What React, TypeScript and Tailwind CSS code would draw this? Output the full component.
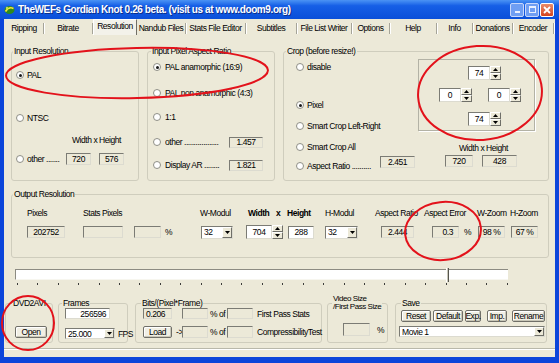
import type { ReactNode } from "react";

// Gordian Knot - Resolution tab (XP look, red markup ellipses on top)

const raised = "border border-t-white border-l-white border-r-[#6f6f68] border-b-[#6f6f68] bg-[#ece9d8]";
const sunken = "border border-t-[#7b7b74] border-l-[#7b7b74] border-r-[#dcdbd0] border-b-[#dcdbd0]";

function Radio({ checked = false }: { checked?: boolean }) {
  return (
    <span className="flex h-[8px] w-[8px] shrink-0 items-center justify-center rounded-full border border-[#8f8f86] bg-white">
      {checked && <span className="h-[3px] w-[3px] rounded-full bg-[#1a1a1a]" />}
    </span>
  );
}

function Field({ className = "", white = false, children }: { className?: string; white?: boolean; children?: ReactNode }) {
  return (
    <div className={`flex shrink-0 items-center ${sunken} ${white ? "bg-white" : "bg-[#ece9d8]"} ${className}`}>
      {children}
    </div>
  );
}

function DownArrow() {
  return (
    <svg width="5" height="3" viewBox="0 0 5 3">
      <path d="M0 0h5L2.5 3z" fill="#000" />
    </svg>
  );
}

function UpArrow() {
  return (
    <svg width="5" height="3" viewBox="0 0 5 3">
      <path d="M0 3h5L2.5 0z" fill="#000" />
    </svg>
  );
}

function Combo({ className = "", value }: { className?: string; value: string }) {
  return (
    <div className={`flex shrink-0 items-stretch bg-white ${sunken} ${className}`}>
      <span className="flex flex-1 items-center pl-[2px]">{value}</span>
      <span className={`flex w-[10px] items-center justify-center ${raised}`}>
        <DownArrow />
      </span>
    </div>
  );
}

function Spin({ value, boxW = "w-[22px]" }: { value: string; boxW?: string }) {
  return (
    <div className="flex h-[14px] shrink-0">
      <div className={`flex items-center justify-center bg-white ${sunken} ${boxW}`}>{value}</div>
      <div className="flex w-[11px] flex-col">
        <span className={`flex flex-1 items-center justify-center ${raised}`}>
          <UpArrow />
        </span>
        <span className={`flex flex-1 items-center justify-center ${raised}`}>
          <DownArrow />
        </span>
      </div>
    </div>
  );
}

function Btn({ className = "", children }: { className?: string; children: ReactNode }) {
  return (
    <div
      className={`flex shrink-0 items-center justify-center rounded-[2px] border border-[#706f68] bg-[#f1efe4] whitespace-nowrap shadow-[inset_1px_1px_0_#fff,inset_-1px_-1px_0_#c9c7b8] ${className}`}
    >
      {children}
    </div>
  );
}

function Group({
  label,
  className = "",
  legendClass = "ml-px",
  children,
}: {
  label: ReactNode;
  className?: string;
  legendClass?: string;
  children?: ReactNode;
}) {
  return (
    <fieldset className={`min-w-0 shrink-0 rounded-[3px] border border-[#cfcdbd] ${className}`}>
      <legend className={`px-px leading-[10px] ${legendClass}`}>{label}</legend>
      {children}
    </fieldset>
  );
}

const tabs: [string, string][] = [
  ["Ripping", "w-[39px]"],
  ["Bitrate", "w-[49px]"],
  ["Resolution", "w-[44px]"],
  ["Nandub Files", "w-[49px]"],
  ["Stats File Editor", "w-[60px]"],
  ["Subtitles", "w-[51px]"],
  ["File List Writer", "w-[55px]"],
  ["Options", "w-[38px]"],
  ["Help", "w-[47px]"],
  ["Info", "w-[36px]"],
  ["Donations", "w-[40px]"],
  ["Encoder", "w-[41px]"],
];

function Tabs() {
  return (
    <div className="flex h-[16px] shrink-0 items-stretch pl-px">
      {tabs.map(([name, w]) =>
        name === "Resolution" ? (
          <div
            key={name}
            className={`flex items-start justify-center border-t border-l border-white border-r border-r-[#716f66] bg-[#f3f2ea] pt-[1px] ${w}`}
          >
            {name}
          </div>
        ) : (
          <div key={name} className={`flex items-center pt-[2px] ${w}`}>
            <span className="flex-1 text-center whitespace-nowrap">{name}</span>
            <span className="h-[11px] w-px bg-[#a5a498] shadow-[1px_0_0_#fff]" />
          </div>
        )
      )}
    </div>
  );
}

function TitleBar() {
  return (
    <div className="flex h-[19px] shrink-0 items-center bg-linear-to-b from-[#4b93f4] via-[#165fe6] via-30% to-[#0a4fd9] pr-[5px] pl-[4px]">
      <svg width="11" height="10" viewBox="0 0 11 10" className="shrink-0">
        <ellipse cx="5.5" cy="5" rx="5" ry="4" fill="#2e8b1e" />
        <path d="M1.5 6.5 Q5 1 9.5 3.5" stroke="#f4e23a" strokeWidth="1.6" fill="none" />
        <circle cx="3" cy="3" r="1.2" fill="#b7e25a" />
      </svg>
      <span className="ml-[3px] text-[10px] font-bold tracking-[-0.4px] text-white [text-shadow:1px_1px_0_#0b2f8c]">
        TheWEFs Gordian Knot 0.26 beta. (visit us at www.doom9.org)
      </span>
      <div className="ml-auto flex gap-[1px]">
        <div className="flex h-[14px] w-[14px] items-end justify-center rounded-[2px] border border-[#c9d8fb] bg-[#6f9ef3] pb-[3px]">
          <span className="h-[2px] w-[5px] bg-[#e9f0ff]" />
        </div>
        <div className="flex h-[14px] w-[14px] items-center justify-center rounded-[2px] border border-[#c9d8fb] bg-[#6f9ef3]">
          <span className="h-[7px] w-[7px] border border-t-2 border-[#e9f0ff]" />
        </div>
        <div className="flex h-[14px] w-[14px] items-center justify-center rounded-[2px] border border-white bg-linear-to-b from-[#e98b69] to-[#d2421b]">
          <svg width="8" height="8" viewBox="0 0 8 8">
            <path d="M1 1l6 6M7 1L1 7" stroke="#fff" strokeWidth="1.8" />
          </svg>
        </div>
      </div>
    </div>
  );
}

function TopGroups() {
  return (
    <div className="mt-[11px] flex shrink-0 gap-[8px] pl-[7px]">
      <Group label="Input Resolution" className="h-[135px] w-[128px]">
        <div className="flex flex-col pl-[4px]">
          <div className="mt-[13px] flex h-[12px] items-center gap-[3px]">
            <Radio checked />
            <span>PAL</span>
          </div>
          <div className="mt-[31px] flex h-[12px] items-center gap-[3px]">
            <Radio />
            <span>NTSC</span>
          </div>
          <div className="mt-[11px] h-[10px] pl-[56px] whitespace-nowrap">Width x Height</div>
          <div className="mt-[8px] flex h-[12px] items-center">
            <Radio />
            <span className="ml-[3px] w-[39px] whitespace-nowrap">other .......</span>
            <Field className="h-[12px] w-[25px] justify-center">720</Field>
            <Field className="ml-[8px] h-[12px] w-[25px] justify-center">576</Field>
          </div>
        </div>
      </Group>

      <Group label="Input Pixel Aspect Ratio" className="h-[135px] w-[128px]" legendClass="ml-[3px]">
        <div className="flex flex-col pl-[5px]">
          <div className="mt-[5px] flex h-[12px] items-center gap-[4px]">
            <Radio checked />
            <span className="whitespace-nowrap">PAL anamorphic (16:9)</span>
          </div>
          <div className="mt-[14px] flex h-[12px] items-center gap-[4px]">
            <Radio />
            <span className="whitespace-nowrap">PAL non anamorphic (4:3)</span>
          </div>
          <div className="mt-[12px] flex h-[12px] items-center gap-[4px]">
            <Radio />
            <span>1:1</span>
          </div>
          <div className="mt-[13px] flex h-[12px] items-center">
            <Radio />
            <span className="ml-[4px] w-[64px] overflow-hidden whitespace-nowrap">other ..................</span>
            <Field className="h-[11px] w-[34px] justify-center">1.457</Field>
          </div>
          <div className="mt-[11px] flex h-[12px] items-center">
            <Radio />
            <span className="ml-[4px] w-[64px] whitespace-nowrap">Display AR ........</span>
            <Field className="h-[11px] w-[34px] justify-center">1.821</Field>
          </div>
        </div>
      </Group>

      <Group label="Crop (before resize!)" className="h-[135px] w-[266px]" legendClass="ml-[2px]">
        <div className="flex">
          <div className="flex w-[134px] flex-col pl-[12px]">
            <div className="mt-[5px] flex h-[12px] items-center gap-[3px]">
              <Radio />
              <span>disable</span>
            </div>
            <div className="mt-[26px] flex h-[12px] items-center gap-[3px]">
              <Radio checked />
              <span>Pixel</span>
            </div>
            <div className="mt-[9px] flex h-[12px] items-center gap-[3px]">
              <Radio />
              <span className="whitespace-nowrap">Smart Crop Left-Right</span>
            </div>
            <div className="mt-[9px] flex h-[12px] items-center gap-[3px]">
              <Radio />
              <span className="whitespace-nowrap">Smart Crop All</span>
            </div>
            <div className="mt-[3px] flex h-[15px] items-end">
              <span className="mb-[1px]">
                <Radio />
              </span>
              <span className="ml-[3px] w-[73px] whitespace-nowrap">Aspect Ratio ..........</span>
              <Field className="h-[12px] w-[35px] self-start justify-center">2.451</Field>
            </div>
          </div>
          <div className="flex flex-col">
            <div className="mt-[3px] flex h-[72px] w-[117px] flex-col border border-[#b3b2a5] shadow-[1px_1px_0_#fff]">
              <div className="mt-[6px] ml-[49px]">
                <Spin value="74" />
              </div>
              <div className="mt-[8px] ml-[20px] flex gap-[16px]">
                <Spin value="0" />
                <Spin value="0" />
              </div>
              <div className="mt-[10px] ml-[49px]">
                <Spin value="74" />
              </div>
            </div>
            <div className="mt-[12px] ml-[41px] h-[10px] whitespace-nowrap">Width x Height</div>
            <div className="mt-[2px] flex h-[12px]">
              <Field className="ml-[27px] w-[28px] justify-center">720</Field>
              <Field className="ml-[9px] w-[35px] justify-center">428</Field>
            </div>
          </div>
        </div>
      </Group>
    </div>
  );
}

function OutputGroup() {
  return (
    <div className="mt-[8px] flex shrink-0 pl-[7px]">
      <Group label="Output Resolution" className="h-[69px] w-[538px]">
        <div className="flex flex-col pl-[15px]">
          <div className="mt-[9px] flex h-[10px] items-center whitespace-nowrap">
            <span className="w-[56px] shrink-0">Pixels</span>
            <span className="w-[117px] shrink-0">Stats Pixels</span>
            <span className="w-[48px] shrink-0">W-Modul</span>
            <span className="w-[28px] shrink-0 font-bold">Width</span>
            <span className="w-[11px] shrink-0 font-bold">x</span>
            <span className="w-[38px] shrink-0 font-bold">Height</span>
            <span className="w-[50px] shrink-0">H-Modul</span>
            <span className="w-[49px] shrink-0">Aspect Ratio</span>
            <span className="w-[53px] shrink-0">Aspect Error</span>
            <span className="w-[33px] shrink-0">W-Zoom</span>
            <span className="shrink-0">H-Zoom</span>
          </div>
          <div className="mt-[8px] flex h-[12px] items-center">
            <Field className="h-[12px] w-[38px] justify-center">202752</Field>
            <Field className="ml-[18px] h-[12px] w-[40px]" />
            <Field className="ml-[11px] h-[12px] w-[27px]" />
            <span className="ml-[4px] w-[36px] shrink-0">%</span>
            <Combo className="h-[13px] w-[32px]" value="32" />
            <div className="ml-[13px]">
              <Spin value="704" boxW="w-[26px]" />
            </div>
            <Field white className="ml-[5px] h-[13px] w-[26px] justify-center">288</Field>
            <Combo className="ml-[11px] h-[13px] w-[33px]" value="32" />
            <Field className="ml-[23px] h-[12px] w-[33px] justify-center">2.444</Field>
            <Field className="ml-[18px] h-[12px] w-[27px] justify-end pr-[5px]">0.3</Field>
            <span className="ml-[5px] w-[14px] shrink-0">%</span>
            <Field className="h-[12px] w-[27px] justify-center">98 %</Field>
            <Field className="ml-[6px] h-[12px] w-[27px] justify-center">67 %</Field>
          </div>
        </div>
      </Group>
    </div>
  );
}

function Slider() {
  return (
    <>
      <div className="relative mt-[11px] ml-[11px] h-[11px] w-[493px] shrink-0 border-t border-l border-[#8c8b82] border-b border-b-[#f7f6ef] bg-white">
        <div className="absolute top-[-2px] left-[430px] h-[14px] w-[3px] border-l border-l-white border-r border-r-[#55554f] bg-[#c9c7b9]" />
      </div>
      <div className="mt-[3px] ml-[13px] flex h-[2px] w-[491px] shrink-0 justify-between">
        {Array.from({ length: 25 }).map((_, i) => (
          <span key={i} className="h-[2px] w-px bg-[#3d3d3a]" />
        ))}
      </div>
    </>
  );
}

function BottomGroups() {
  return (
    <div className="mt-[13px] flex h-[45px] shrink-0 items-start pl-px">
      <Group label="DVD2AVI" className="h-[45px] w-[48px]" legendClass="ml-[6px]">
        <Btn className="mt-[18px] ml-[9px] h-[12px] w-[32px]">Open</Btn>
      </Group>

      <Group label="Frames" className="ml-[5px] h-[45px] w-[70px]" legendClass="ml-[3px]">
        <div className="flex flex-col pl-[6px]">
          <Field white className="h-[11px] w-[45px] justify-end pr-[3px]">256596</Field>
          <div className="mt-[9px] flex items-center">
            <Combo className="h-[11px] w-[50px]" value="25.000" />
            <span className="ml-[3px] tracking-[-0.6px]">FPS</span>
          </div>
        </div>
      </Group>

      <Group label="Bits/(Pixel*Frame)" className="ml-[7px] h-[45px] w-[187px]" legendClass="ml-[5px]">
        <div className="flex flex-col pl-[7px]">
          <div className="flex h-[11px] items-center whitespace-nowrap">
            <Field className="h-[11px] w-[29px] pl-[2px]">0.206</Field>
            <Field className="ml-[10px] h-[11px] w-[26px]" />
            <span className="ml-[2px] w-[17px] shrink-0">% of</span>
            <Field className="h-[11px] w-[26px]" />
            <span className="ml-[4px]">First Pass Stats</span>
          </div>
          <div className="mt-[7px] flex h-[12px] items-center whitespace-nowrap">
            <Btn className="h-[12px] w-[29px]">Load</Btn>
            <span className="ml-[4px] w-[6px] shrink-0">-&gt;</span>
            <Field className="h-[12px] w-[26px]" />
            <span className="ml-[2px] w-[17px] shrink-0">% of</span>
            <Field className="h-[12px] w-[26px]" />
            <span className="ml-[4px]">CompressibilityTest</span>
          </div>
        </div>
      </Group>

      <Group
        label={
          <>
            Video Size
            <br />
            /First Pass Size
          </>
        }
        className="mt-[-3px] ml-[5px] h-[48px] w-[61px]"
        legendClass="ml-[4px] !leading-[8px] text-[8px] whitespace-nowrap"
      >
        <div className="mt-[12px] flex items-center">
          <Field className="ml-[15px] h-[13px] w-[27px]" />
          <span className="ml-[7px]">%</span>
        </div>
      </Group>

      <Group label="Save" className="ml-[7px] h-[45px] w-[152px]" legendClass="ml-[5px]">
        <div className="flex flex-col pl-[5px]">
          <div className="mt-[2px] flex h-[12px]">
            <Btn className="w-[30px]">Reset</Btn>
            <Btn className="ml-[2px] w-[30px]">Default</Btn>
            <Btn className="ml-[2px] w-[16px]">Exp.</Btn>
            <Btn className="ml-[6px] w-[20px]">Imp.</Btn>
            <Btn className="ml-[5px] w-[33px]">Rename</Btn>
          </div>
          <Combo className="mt-[4px] ml-[-2px] h-[11px] w-[146px]" value="Movie 1" />
        </div>
      </Group>
    </div>
  );
}

export default function App() {
  return (
    <div className="relative flex h-[363px] w-[559px] flex-col overflow-hidden bg-[#0c45da] font-['Liberation_Sans',Arial,sans-serif] text-[8.5px] leading-[10px] tracking-[-0.45px] text-black">
      <TitleBar />
      <div className="mx-[4px] mb-[6px] flex flex-1 flex-col bg-[#ece9d8]">
        <Tabs />
        <TopGroups />
        <OutputGroup />
        <Slider />
        <BottomGroups />
        <div className="mt-[5px] flex-1 border-t border-[#b9b8aa] shadow-[inset_0_1px_0_#fff]" />
      </div>

      {/* red markup drawn over the screenshot */}
      <svg className="pointer-events-none absolute top-0 left-0" width="559" height="363" viewBox="0 0 559 363">
        <g fill="none" stroke="#e3121b" strokeWidth="2">
          <ellipse cx="137" cy="73" rx="131" ry="25" transform="rotate(-1.2 137 73)" />
          <ellipse cx="480" cy="93" rx="62" ry="47" transform="rotate(-4 480 93)" />
          <ellipse cx="443" cy="231" rx="38" ry="29" transform="rotate(-6 443 231)" />
          <ellipse cx="28" cy="323" rx="26" ry="27" />
        </g>
      </svg>
    </div>
  );
}
